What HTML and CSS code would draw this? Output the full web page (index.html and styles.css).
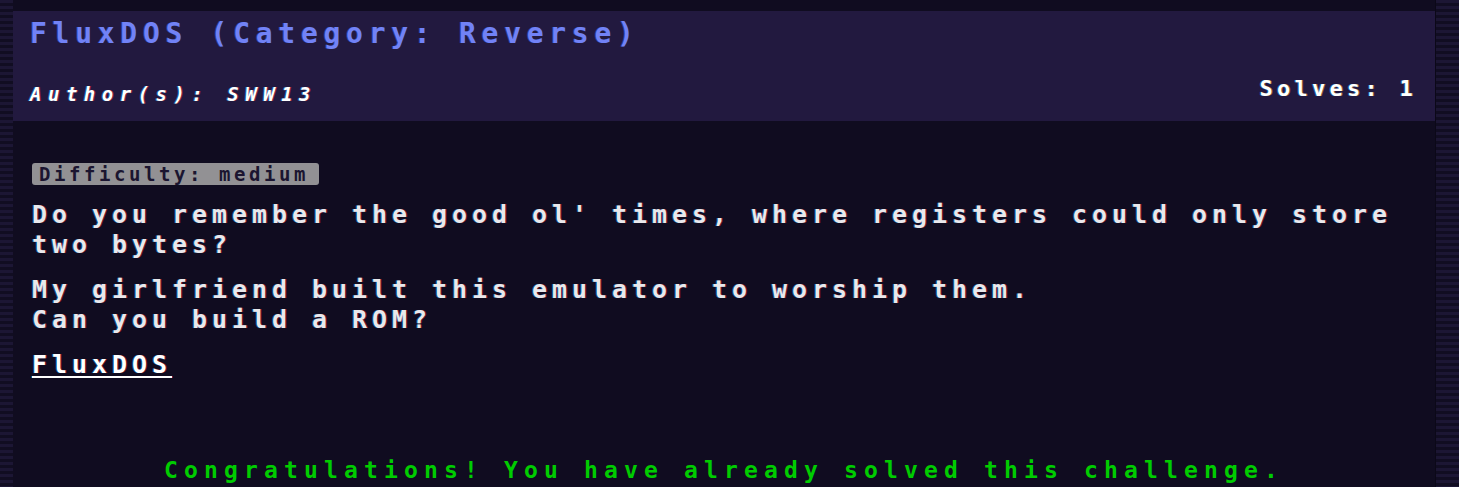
FILE: index.html
```html
<!DOCTYPE html>
<html lang="en">
<head>
<meta charset="utf-8">
<title>FluxDOS</title>
<link rel="stylesheet" href="styles.css">
</head>
<body>
<main class="card">
  <header class="card-header">
    <h1 class="title">FluxDOS (Category: Reverse)</h1>
    <div class="meta">
      <span class="author">Author(s): SWW13</span>
      <span class="solves">Solves: 1</span>
    </div>
  </header>
  <section class="content">
    <span class="badge">Difficulty: medium</span>
    <p class="text">Do you remember the good ol' times, where registers could only store two bytes?</p>
    <p class="text">My girlfriend built this emulator to worship them.<br>Can you build a ROM?</p>
    <p class="text"><a class="link" href="#">FluxDOS</a></p>
    <p class="solved">Congratulations! You have already solved this challenge.</p>
  </section>
</main>
</body>
</html>
```

FILE: styles.css
```css
html, body {
  margin: 0;
  padding: 0;
}

body {
  height: 487px;
  overflow: hidden;
  background: repeating-linear-gradient(180deg, #1c1634 0 3px, #110d22 3px 6px);
  font-family: "DejaVu Sans Mono", "Liberation Mono", monospace;
  font-weight: bold;
}

.card {
  margin-left: 13px;
  width: 1423px;
  min-height: 487px;
  padding-top: 11px;
  box-sizing: border-box;
  background: #100c20;
  border-right: 1px solid #0b0818;
}

.card-header {
  background: #22193f;
  padding: 7px 22px 15px 17px;
  display: flex;
  flex-direction: column;
}

.title {
  margin: 0;
  font-size: 28px;
  line-height: 32px;
  letter-spacing: 5.72px;
  color: #7282f6;
  font-weight: bold;
  text-shadow: -1px 0 rgba(60, 140, 255, 0.35);
}

.meta {
  display: flex;
  justify-content: space-between;
  align-items: flex-start;
  margin-top: 27px;
}

.author {
  margin-top: 5px;
  font-size: 19px;
  line-height: 24px;
  letter-spacing: 6.5px;
  font-style: italic;
  color: #ffffff;
  text-shadow: -1px 0 rgba(0, 170, 255, 0.5), 1px 0 rgba(255, 40, 60, 0.5);
}

.solves {
  font-size: 22px;
  line-height: 24px;
  letter-spacing: 4.25px;
  margin-right: -4px;
  color: #ffffff;
  text-shadow: -1px 0 rgba(0, 170, 255, 0.5), 1px 0 rgba(255, 170, 40, 0.5);
}

.content {
  padding: 42px 19px 0 19px;
  display: flex;
  flex-direction: column;
  align-items: flex-start;
}

.badge {
  display: inline-block;
  background: #929194;
  color: #1b1530;
  border-radius: 3px;
  font-size: 19px;
  line-height: 22px;
  letter-spacing: 3.56px;
  padding: 0 10px 0 7px;
}

.text {
  margin: 15px 0 0 0;
  font-size: 25px;
  line-height: 30px;
  letter-spacing: 4.95px;
  color: #e9e8ec;
  text-shadow: -1px 0 rgba(0, 170, 255, 0.45), 1px 0 rgba(255, 30, 60, 0.45);
}

.link {
  color: #ffffff;
  text-decoration: underline;
  text-decoration-thickness: 2px;
  text-underline-offset: 3px;
}

.solved {
  align-self: stretch;
  margin: 75px 0 0 0;
  text-align: center;
  font-size: 23px;
  line-height: 30px;
  letter-spacing: 6.15px;
  color: #00cc00;
}
```
